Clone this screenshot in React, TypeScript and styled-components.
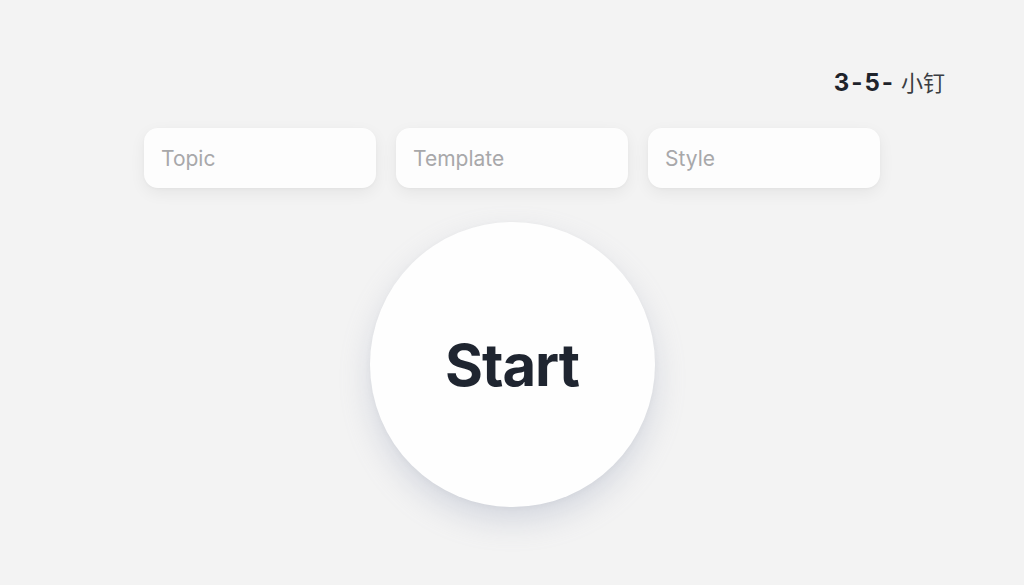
import React from "react";
import styled, { createGlobalStyle } from "styled-components";

const Global = createGlobalStyle`
  html, body { margin: 0; padding: 0; background: #f3f3f3; }
  body { font-family: Inter, "Noto Sans", "Noto Sans CJK SC", sans-serif; }
`;

const Page = styled.div`
  width: 1024px;
  height: 585px;
  display: flex;
  flex-direction: column;
  align-items: center;
  background: #f3f3f3;
  overflow: hidden;
`;

const Header = styled.div`
  align-self: stretch;
  display: flex;
  justify-content: flex-end;
  align-items: flex-start;
  padding: 66px 79px 0 0;
  height: 128px;
  box-sizing: border-box;
`;

const Badge = styled.div`
  font-size: 24px;
  line-height: 30px;
  color: #1e232b;
  display: flex;
  align-items: baseline;
  gap: 6px;
`;

const Num = styled.span`
  font-weight: 700;
  letter-spacing: 2px;
`;

const Cn = styled.span`
  font-family: "Noto Sans CJK SC", sans-serif;
  font-weight: 400;
  font-size: 22px;
  color: #3a3d42;
`;

const Fields = styled.div`
  display: flex;
  gap: 20px;
`;

const Field = styled.div`
  width: 232px;
  height: 60px;
  box-sizing: border-box;
  background: #fdfdfd;
  border-radius: 14px;
  box-shadow: 0 5px 16px rgba(0, 0, 0, 0.06), 0 1px 3px rgba(0, 0, 0, 0.03);
  display: flex;
  align-items: center;
  padding-left: 17px;
  font-size: 21px;
  color: #a8a8aa;
`;

const StartButton = styled.button`
  margin-top: 34px;
  width: 285px;
  height: 285px;
  border-radius: 50%;
  border: none;
  background: #fefefe;
  box-shadow: 0 14px 30px rgba(150, 160, 185, 0.32), 0 2px 6px rgba(0, 0, 0, 0.04);
  font-family: Inter, "Noto Sans", sans-serif;
  font-weight: 700;
  font-size: 58px;
  color: #1f2530;
  letter-spacing: -1px;
  cursor: pointer;
  padding: 0;
`;

export default function App() {
  return (
    <Page>
      <Global />
      <Header>
        <Badge>
          <Num>3-5-</Num>
          <Cn>小钉</Cn>
        </Badge>
      </Header>
      <Fields>
        <Field>Topic</Field>
        <Field>Template</Field>
        <Field>Style</Field>
      </Fields>
      <StartButton>Start</StartButton>
    </Page>
  );
}
